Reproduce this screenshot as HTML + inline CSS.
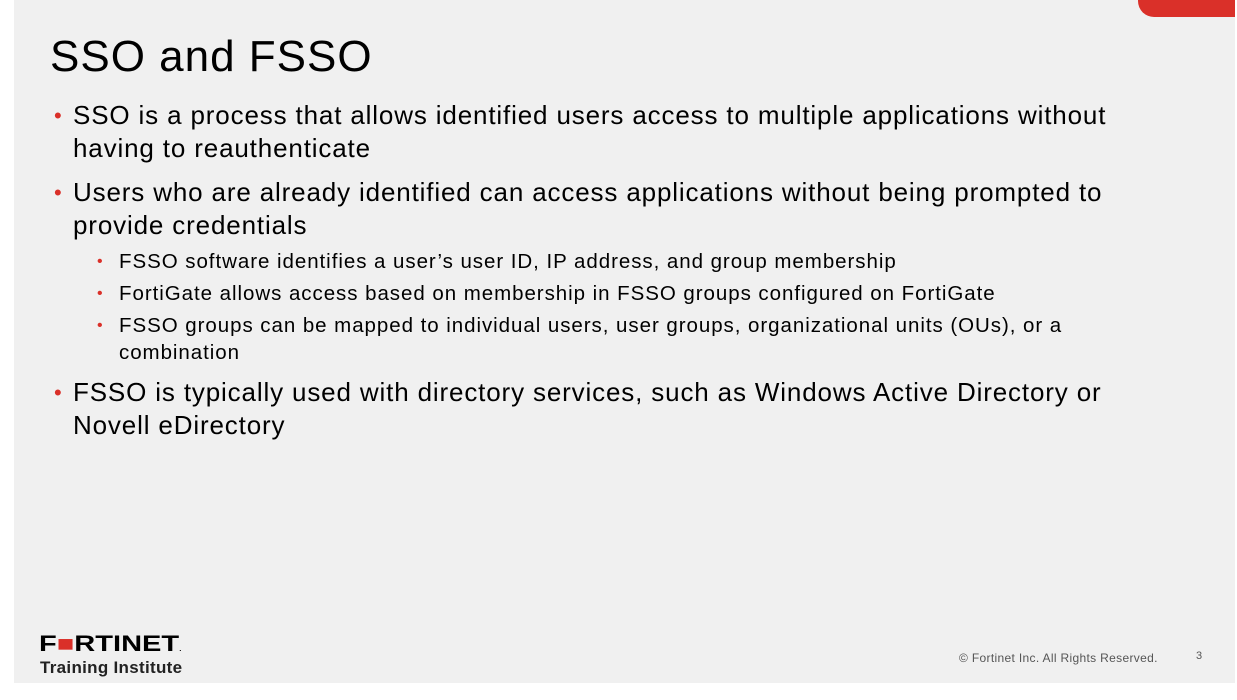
<!DOCTYPE html><html><head><style>
body{margin:0;width:1237px;height:700px;background:#fff;position:relative;overflow:hidden;font-family:"Liberation Sans",Arial,sans-serif;color:#000}
.s{position:absolute;left:14px;top:0;width:1221px;height:683px;background:#f0f0f0}
.red{position:absolute;left:1138px;top:0;width:97px;height:17px;background:#da3029;border-bottom-left-radius:16px}
.t{position:absolute;left:50px;top:30px;font-size:44px;line-height:54px;letter-spacing:1px}
.b{position:absolute;left:73px;font-size:26px;line-height:33px;width:1060px;letter-spacing:0.85px}
.b:before{content:"•";color:#da3029;position:absolute;left:-19px;font-size:22px}
.sb{position:absolute;left:119px;font-size:20.5px;line-height:27px;width:990px;letter-spacing:0.95px}
.sb:before{content:"•";color:#da3029;position:absolute;left:-22px;font-size:16px}
.f{position:absolute;font-size:12px;color:#555;top:651px;letter-spacing:0.33px}
</style></head><body>
<div class="s"></div><div class="red"></div>
<div class="t">SSO and FSSO</div>
<div class="b" style="top:99px">SSO is a process that allows identified users access to multiple applications without having to reauthenticate</div>
<div class="b" style="top:176px">Users who are already identified can access applications without being prompted to provide credentials</div>
<div class="sb" style="top:248px">FSSO software identifies a user’s user ID, IP address, and group membership</div>
<div class="sb" style="top:280px">FortiGate allows access based on membership in FSSO groups configured on FortiGate</div>
<div class="sb" style="top:312px;width:970px">FSSO groups can be mapped to individual users, user groups, organizational units (OUs), or a combination</div>
<div class="b" style="top:376px">FSSO is typically used with directory services, such as Windows Active Directory or Novell eDirectory</div>
<div style="position:absolute;left:39px;top:632px;font-size:22px;font-weight:bold;line-height:24px;transform:scaleX(1.32);transform-origin:0 0">F<span style="color:#da3029">■</span>RTINET<span style="font-size:6px">.</span></div>
<div style="position:absolute;left:40px;top:658px;font-size:17px;font-weight:bold;color:#222;letter-spacing:0.3px">Training Institute</div>
<div class="f" style="left:959px">© Fortinet Inc. All Rights Reserved.</div>
<div class="f" style="left:1196px;font-size:11px;top:650px">3</div>
</body></html>
